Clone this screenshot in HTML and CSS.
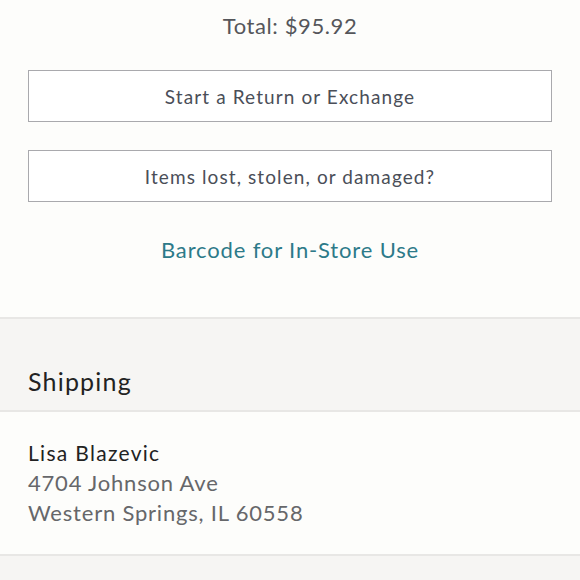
FILE: index.html
```html
<!DOCTYPE html>
<html lang="en">
<head>
  <meta charset="UTF-8">
  <meta name="viewport" content="width=device-width, initial-scale=1.0">
  <title>Order Details</title>
  <link rel="stylesheet" href="styles.css">
</head>
<body>

  <!-- Order summary -->
  <section class="summary">
    <p class="total">Total: $95.92</p>
    <a href="#" class="outline-btn">Start a Return or Exchange</a>
    <a href="#" class="outline-btn">Items lost, stolen, or damaged?</a>
    <a href="#" class="barcode-link">Barcode for In-Store Use</a>
  </section>

  <!-- Shipping -->
  <h2 class="section-title">Shipping</h2>
  <div class="address">
    <div class="name">Lisa Blazevic</div>
    <div class="line">4704 Johnson Ave</div>
    <div class="line">Western Springs, IL 60558</div>
  </div>
  <div class="section-next"></div>

</body>
</html>
```

FILE: styles.css
```css
body {
  margin: 0;
  font-family: Lato, "Noto Sans", sans-serif;
  background: #fdfdfb;
  color: #222;
  letter-spacing: 0.6px;
}

.summary {
  display: flex;
  flex-direction: column;
  align-items: center;
  padding: 10px 28px 0;
  height: 319px;
  box-sizing: border-box;
  border-bottom: 2px solid #e8e7e5;
}

.total {
  margin: 0;
  font-size: 22px;
  line-height: 32px;
  color: #55565a;
}

.outline-btn {
  align-self: stretch;
  display: flex;
  align-items: center;
  justify-content: center;
  height: 52px;
  box-sizing: border-box;
  margin-top: 28px;
  border: 1px solid #a9a9ad;
  background: #fff;
  text-decoration: none;
  font-size: 19px;
  letter-spacing: 1.1px;
  color: #4a4e58;
}

.barcode-link {
  margin-top: 34px;
  font-size: 22px;
  line-height: 28px;
  letter-spacing: 0.85px;
  text-decoration: none;
  color: #2d7a89;
}

.section-title {
  margin: 0;
  height: 93px;
  box-sizing: border-box;
  padding: 47px 28px 0;
  background: #f6f5f3;
  border-bottom: 2px solid #e8e7e5;
  font-size: 25px;
  font-weight: 400;
  line-height: 30px;
  letter-spacing: 1.2px;
  color: #222;
}

.address {
  height: 144px;
  box-sizing: border-box;
  padding: 26px 28px 0;
  font-size: 21px;
  line-height: 30px;
  border-bottom: 2px solid #e8e7e5;
}

.address .name {
  color: #222;
  letter-spacing: 1.3px;
}

.address .line {
  color: #66676a;
  font-size: 22px;
  letter-spacing: 0.8px;
}

.section-next {
  height: 40px;
  background: #f6f5f3;
}
```
